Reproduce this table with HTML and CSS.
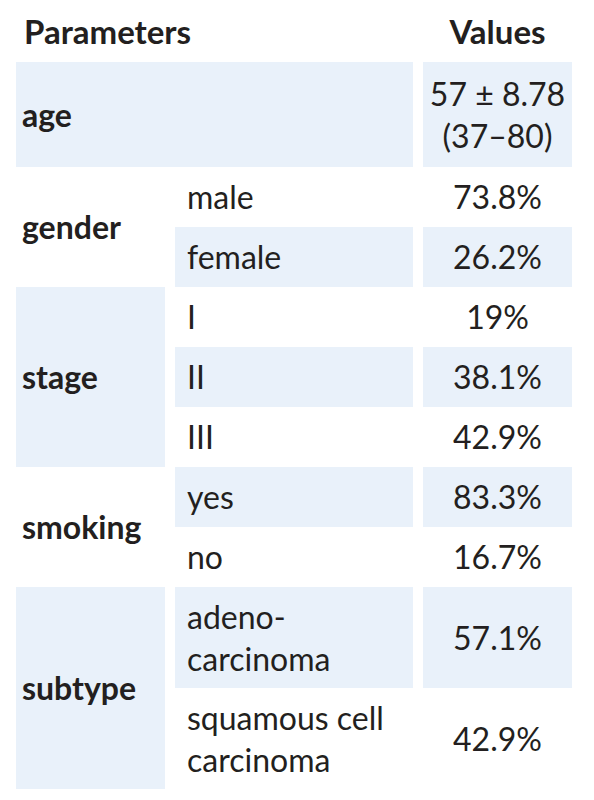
FILE: index.html
```html
<!DOCTYPE html>
<html lang="en">
<head>
  <meta charset="UTF-8" />
  <meta name="viewport" content="width=device-width, initial-scale=1" />
  <title>Patient characteristics</title>
  <link rel="stylesheet" href="styles.css">
</head>
<body>
  <table class="params">
    <colgroup>
      <col class="col-group">
      <col class="col-item">
      <col class="col-value">
    </colgroup>
    <thead>
      <tr class="head-row">
        <th class="name" colspan="2">Parameters</th>
        <th class="value">Values</th>
      </tr>
    </thead>
    <tbody>
      <tr class="tall-row">
        <td class="group shaded" colspan="2">age</td>
        <td class="value shaded">57 ± 8.78<br>(37–80)</td>
      </tr>

      <tr>
        <td class="group" rowspan="2">gender</td>
        <td class="item">male</td>
        <td class="value">73.8%</td>
      </tr>
      <tr>
        <td class="item shaded">female</td>
        <td class="value shaded">26.2%</td>
      </tr>

      <tr>
        <td class="group shaded" rowspan="3">stage</td>
        <td class="item">I</td>
        <td class="value">19%</td>
      </tr>
      <tr>
        <td class="item shaded">II</td>
        <td class="value shaded">38.1%</td>
      </tr>
      <tr>
        <td class="item">III</td>
        <td class="value">42.9%</td>
      </tr>

      <tr>
        <td class="group" rowspan="2">smoking</td>
        <td class="item shaded">yes</td>
        <td class="value shaded">83.3%</td>
      </tr>
      <tr>
        <td class="item">no</td>
        <td class="value">16.7%</td>
      </tr>

      <tr class="double-row">
        <td class="group shaded" rowspan="2">subtype</td>
        <td class="item shaded">adeno-<br>carcinoma</td>
        <td class="value shaded">57.1%</td>
      </tr>
      <tr class="double-row">
        <td class="item">squamous cell<br>carcinoma</td>
        <td class="value">42.9%</td>
      </tr>
    </tbody>
  </table>
</body>
</html>
```

FILE: styles.css
```css
* {
  margin: 0;
  padding: 0;
  box-sizing: border-box;
}

body {
  background: #fff;
  color: #231f20;
  font-family: Lato, "Open Sans", sans-serif;
  font-size: 32px;
}

.params {
  margin-left: 6px;
  border-collapse: separate;
  border-spacing: 10px 0;
  table-layout: fixed;
  width: 576px;
}

.col-group {
  width: 149px;
}

.col-item {
  width: 238px;
}

.col-value {
  width: 149px;
}

.params th,
.params td {
  line-height: 42px;
  height: 60px;
  padding: 0 12px;
  text-align: left;
  vertical-align: middle;
  font-weight: normal;
  white-space: nowrap;
}

.params th {
  height: 62px;
  font-size: 33px;
  font-weight: bold;
}

.params th.name {
  padding-left: 8px;
}

.params .group {
  padding-left: 6px;
  font-weight: bold;
}

.params .value {
  padding: 0;
  text-align: center;
}

.tall-row td {
  height: 105px;
}

.double-row td {
  height: 101px;
}

.shaded {
  background-color: #e9f1fa;
}
```
